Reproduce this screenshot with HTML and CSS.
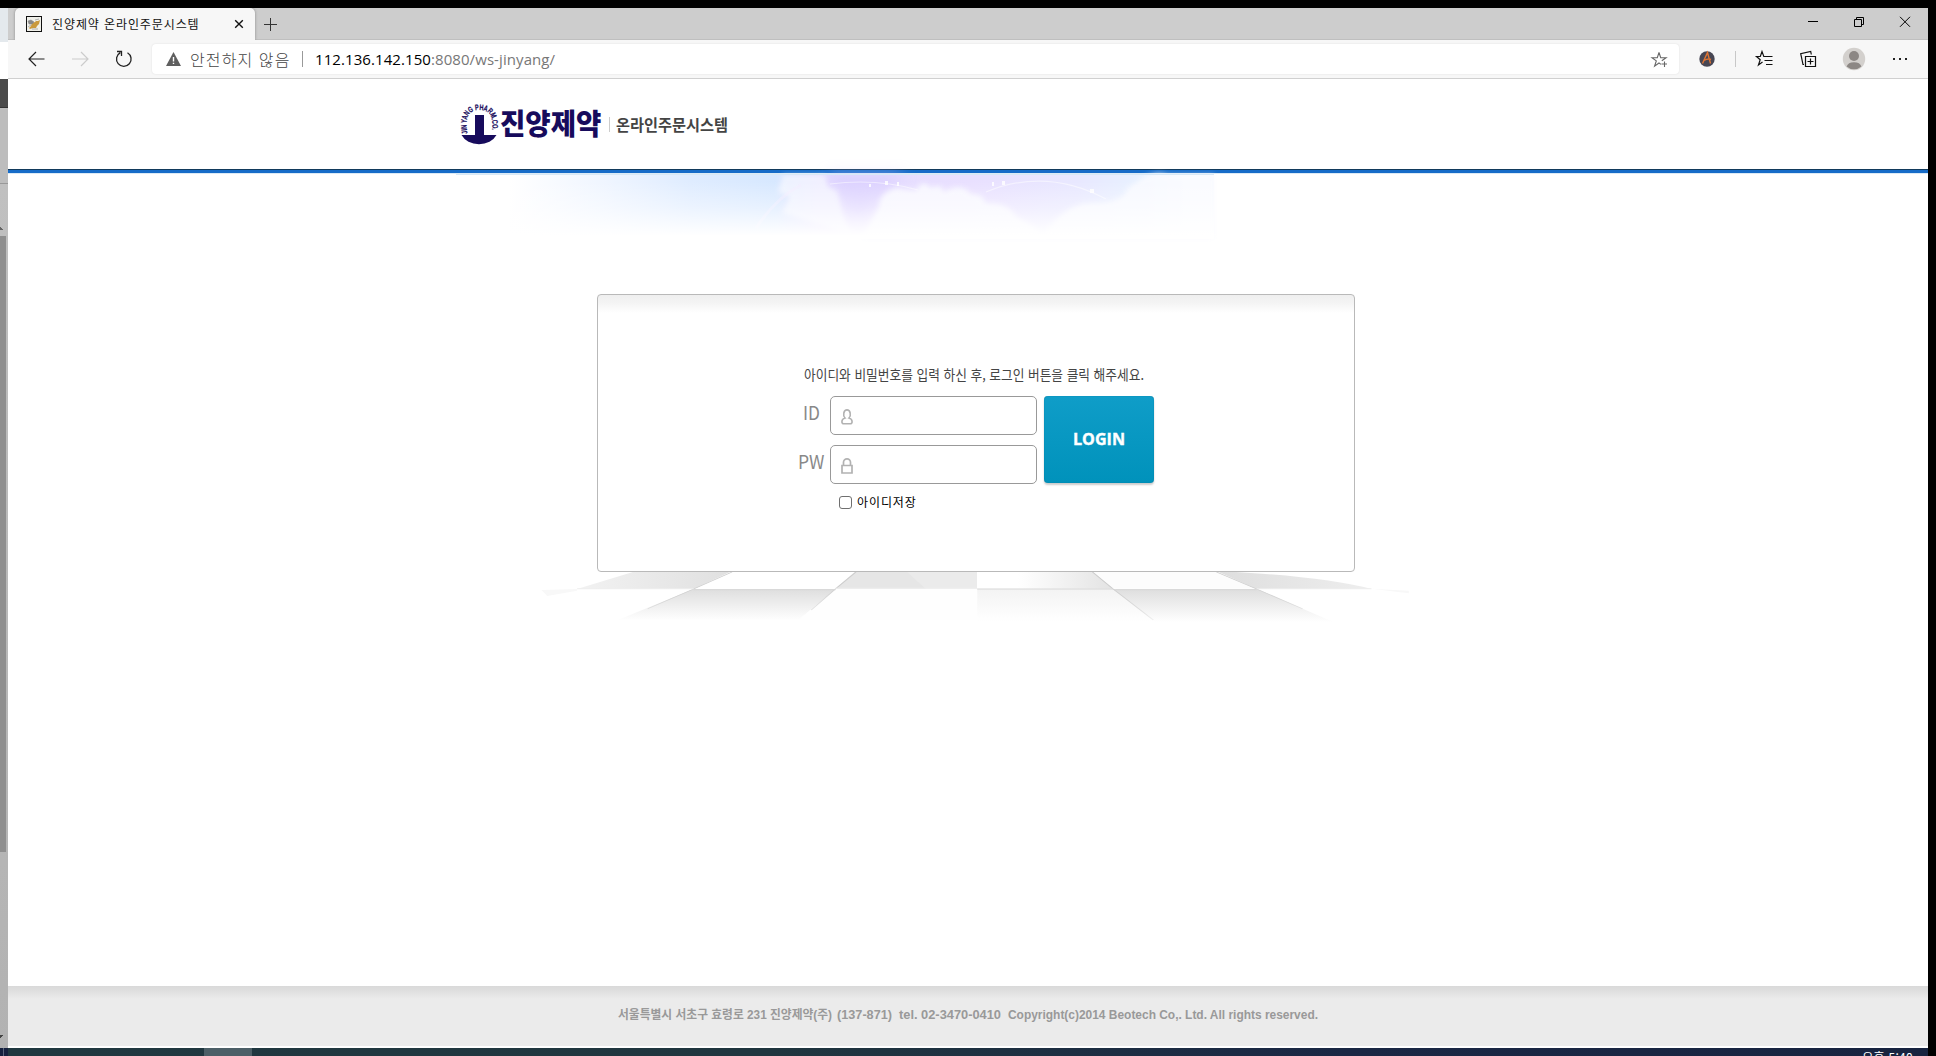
FILE: index.html
```html
<!DOCTYPE html>
<html lang="ko">
<head>
<meta charset="utf-8">
<title>진양제약 온라인주문시스템</title>
<link rel="stylesheet" href="styles.css">
</head>
<body>
<div class="desktop">
  <div class="behind">
    <div class="behind-tabs"></div><div class="behind-bar"></div><div class="behind-head"></div>
    <div class="behind-tools"></div>
    <div class="behind-scroll">
      <svg class="up" width="3" height="3"><path d="M0 0h1v1h1v1h1v1H0z" fill="#666"/></svg>
      <div class="thumb"></div>
      <svg class="down" width="3" height="3"><path d="M0 0h3v1H2v1H1v1H0z" fill="#444"/></svg>
    </div>
  </div>
  <div class="window">
    <div class="tabstrip">
      <div class="tab">
        <svg width="16" height="16" viewBox="0 0 16 16"><rect x=".5" y=".5" width="15" height="15" fill="#f0f0ea" stroke="#111"/><path d="M3 12l2-2 1-3 3-1 1-1 2 0 2-1-1 4-2 2-1 2H9l-2 0-3 1z" fill="#c9993d"/><path d="M2 5l3-1 3 2-2 2-3 0zM9 4l4-1M2 11l3-2M6 13l6 0" fill="#888" stroke="#888" stroke-width=".6"/></svg>
        <span class="tab-title">진양제약 온라인주문시스템</span>
        <svg class="tab-close" width="10" height="10" viewBox="0 0 10 10"><path d="M1.2 1.2l7.600 7.600M8.800 1.200l-7.600 7.600" stroke="#111" stroke-width="1.400"/></svg>
      </div>
      <svg class="newtab" width="13" height="13" viewBox="0 0 13 13"><path d="M6.500 0v13M0 6.500h13" stroke="#333"/></svg>
      <svg class="winctl" width="104" height="12" viewBox="0 0 104 12" fill="none" stroke="#000"><path d="M0 5.500h10M46.500 3.500h7v7h-7zM48.500 3.500v-2h7v7h-2M92 .8l10 10M102 .8l-10 10"/></svg>
    </div>
    <div class="toolbar">
      <svg class="nav" width="104" height="18" viewBox="0 0 104 18" fill="none"><path d="M16.500 9H1.500M8 2L1 9l7 7" stroke="#222" stroke-width="1.200"/><path d="M44 9h15.500M53 2l7 7-7 7" stroke="#ccc" stroke-width="1.200"/><path d="M99.500 2.700A7.300 7.300 0 1 1 92.300 2.600M89 1.500h4.500V6" stroke="#222" stroke-width="1.300"/></svg>
      <div class="address">
        <svg class="warn" width="15" height="14" viewBox="0 0 15 14"><path d="M7.500 0L15 14H0z" fill="#5f5f5f"/><path d="M6.800 5h1.400v4.500H6.800zM6.800 10.700h1.400V12H6.800z" fill="#fff"/></svg>
        <span class="unsafe">안전하지 않음</span><span class="bar"></span>
        <span class="url"><b>112.136.142.150</b>:8080/ws-jinyang/</span>
        <svg class="star" width="17" height="17" viewBox="0 0 17 17" fill="none" stroke="#666"><path d="M8 1.500l1.700 5.200h5.400l-4.300 3.100M8 1.500L6.300 6.700H1l4.300 3.200-1.700 5.200L8 12l2 1.400M10.500 13H16M13.500 10.500V16" stroke-width="1.100"/></svg>
      </div>
      <svg class="tools" width="212" height="24" viewBox="0 0 212 24" fill="none">
        <circle cx="8" cy="12" r="7.700" fill="#474653"/><path d="M3.500 16.500L8.500 5.500l3 11M5 13.500q4-2.500 7-1" stroke="#df7433" stroke-width="1.400"/>
        <path d="M36.500 4v16" stroke="#c8c8c8"/>
        <path d="M67 9.500h-2.200L63 4.500l-1.700 5H57.500l3.700 3.200-1.700 5.200 4-3M67 9.500h6.500M65.500 13.500h8M67 17.500h6.500" stroke="#111" stroke-width="1.200"/>
        <path d="M106.500 9.500h10v10h-10zM111.500 11.500v6M108.500 14.500h6M105 17.500h-1l-2.300-10.800 10-2.200.6 3" stroke="#111" stroke-width="1.200"/>
        <circle cx="155" cy="12" r="11.200" fill="#d3d0cd"/><circle cx="155" cy="9" r="5" fill="#8c8784"/><path d="M147.600 19.500a7.600 5.500 0 0 1 14.800 0 11.200 11.200 0 0 1-14.800 0z" fill="#8c8784"/>
        <path d="M194 11h2v2h-2zM200 11h2v2h-2zM206 11h2v2h-2z" fill="#222"/>
      </svg>
    </div>
    <div class="page">
      <header class="site-header">
        <svg width="36" height="44" viewBox="0 0 36 44"><path d="M14 12h9v20h12.500a19 15 0 0 1-35 0H14z" fill="#170b5c"/><defs><path id="arc" d="M6.500 30.500C3.700 17 6 7 18.400 7S33 17 30.300 31"/></defs><text class="ring"><textPath href="#arc" textLength="59" lengthAdjust="spacingAndGlyphs">JIN YANG PHARM.CO.</textPath></text></svg>
        <svg class="brand" width="102" height="40" viewBox="0 0 102 40"><text x="0" y="28.500" textLength="101.500" lengthAdjust="spacingAndGlyphs">진양제약</text></svg>
        <span class="split"></span>
        <svg class="subtitle" width="116" height="26" viewBox="0 0 116 26"><text x="0" y="18" textLength="112" lengthAdjust="spacingAndGlyphs">온라인주문시스템</text></svg>
      </header>
      <svg class="sky" width="758" height="66" viewBox="0 0 758 66">
        <defs>
          <filter id="soft" x="-20%" y="-50%" width="140%" height="200%"><feGaussianBlur stdDeviation="7"/></filter>
          <filter id="puff" x="-20%" y="-50%" width="140%" height="200%"><feGaussianBlur stdDeviation="2.500"/></filter>
          <linearGradient id="hue"><stop offset=".07" stop-color="#fff"/><stop offset=".2" stop-color="#eff5ff"/><stop offset=".31" stop-color="#dfecff"/><stop offset=".42" stop-color="#d7e8ff"/><stop offset=".48" stop-color="#e4dcff"/><stop offset=".68" stop-color="#e9e0ff"/><stop offset=".82" stop-color="#e8e8ff"/><stop offset=".9" stop-color="#e8f1ff"/><stop offset=".96" stop-color="#fafbff"/></linearGradient>
          <linearGradient id="fade" x2="0" y2="1"><stop offset=".1" stop-color="#fff" stop-opacity="0"/><stop offset=".5" stop-color="#fff" stop-opacity=".4"/><stop offset=".95" stop-color="#fff"/></linearGradient>
        </defs>
        <rect y="1" width="758" height="65" fill="url(#hue)"/>
        <path d="M370 1H450L420 30 400 50z" fill="#d3c6ff" opacity=".5" filter="url(#soft)"/>
        <path d="M327 2h42l3 12 9 4 6 24 9 20-70-22 8-16-12-5z" fill="#f7f9ff" opacity=".7" filter="url(#puff)"/>
        <path d="M405 66l18-32q0-15 18-19 15 3 20 2 5-12 14-2 12-5 12 4 20-10 28 2 13 0 14 9 25 0 30 13 20 10 28 20 22-34 50-33 30 0 35-15 25-20 40-13h46v64z" fill="#fafbff" opacity=".85" filter="url(#puff)"/>
        <path d="M374 11Q420 5 462 17M530 19Q590-6 650 26" fill="none" stroke="#fff" stroke-width="1.200" opacity=".5"/>
        <path d="M300 55Q320 25 345 12" fill="none" stroke="#f6ecff" stroke-width="3" opacity=".4"/>
        <path d="M413 11h2v3h-2zM429 8h3v4h-3zM441 9h2v4h-2zM536 9h2v4h-2zM546 8h3v4h-3zM634 16h4v4h-4z" fill="#fff" opacity=".8"/>
        <rect y="2" width="758" height="64" fill="url(#fade)"/>
        <rect y="1" width="758" height="1" fill="#d8e9f6"/>
      </svg>
      <main class="card">
        <div class="form">
          <svg class="guide" width="344" height="24" viewBox="0 0 344 24"><text x="0" y="15" textLength="340" lengthAdjust="spacingAndGlyphs">아이디와 비밀번호를 입력 하신 후, 로그인 버튼을 클릭 해주세요.</text></svg>
          <div class="fields">
            <svg class="labels" width="31" height="88" viewBox="0 0 31 88"><text x="4" y="24" textLength="17" lengthAdjust="spacingAndGlyphs">ID</text><text x="-1" y="73" textLength="26.500" lengthAdjust="spacingAndGlyphs">PW</text></svg>
            <div class="inputs">
              <div class="input"><svg width="12" height="16" viewBox="0 0 12 16" fill="none" stroke="#b2b2b2" stroke-width="1.600"><path d="M4 9C1.600 6.500 2.600.9 6 .9S10.400 6.500 8 9c2.200.6 3.100 2 3.100 3.800 0 1.300-.7 2-1.900 2H2.800c-1.200 0-1.900-.7-1.900-2C.9 11 1.800 9.600 4 9z"/></svg></div>
              <div class="input"><svg width="12" height="16" viewBox="0 0 12 16" fill="none" stroke="#b2b2b2" stroke-width="1.700"><path d="M1 7.500h10v7.500H1zM2.500 7.500V4.300a3.500 3.500 0 0 1 7 0v3.200"/></svg></div>
            </div>
            <div class="login"><svg width="56" height="20" viewBox="0 0 56 20"><text x="2" y="15" textLength="52" lengthAdjust="spacingAndGlyphs">LOGIN</text></svg></div>
          </div>
          <label class="save"><span class="check"></span><span class="save-text">아이디저장</span></label>
        </div>
      </main>
      <svg class="floor" width="900" height="58" viewBox="0 96 1568 174" preserveAspectRatio="none">
        <defs>
          <linearGradient id="g1"><stop offset="0" stop-color="#f2f2f2"/><stop offset="1" stop-color="#e0e0e0"/></linearGradient>
          <linearGradient id="g2" x2="0" y2="1"><stop offset="0" stop-color="#dedede"/><stop offset="1" stop-color="#fff"/></linearGradient>
          <linearGradient id="g3" x2="0" y2="1"><stop offset="0" stop-color="#f3f3f3"/><stop offset="1" stop-color="#fff"/></linearGradient>
          <linearGradient id="g4"><stop offset=".3" stop-color="#fff"/><stop offset="1" stop-color="#e3e3e3"/></linearGradient>
          <linearGradient id="g5"><stop offset="0" stop-color="#dedede"/><stop offset="1" stop-color="#eee"/></linearGradient>
          <linearGradient id="g6" gradientUnits="userSpaceOnUse" x1="0" y1="96" x2="0" y2="240"><stop offset=".3" stop-color="#ccc"/><stop offset="1" stop-color="#ccc" stop-opacity="0.300"/></linearGradient>
        </defs>
        <path d="M185 93H352L285 147H82z" fill="url(#g1)"/>
        <path d="M568 93H779V146H532z" fill="#ebebeb"/><path d="M568 93h87l34 53H532z" fill="#e6e6e6"/>
        <path d="M779 93H980l36 53H779z" fill="url(#g4)"/>
        <path d="M980 93h216l70 53H1016z" fill="#fcfcfc"/>
        <path d="M1196 93Q1380 108 1466 147H1266z" fill="url(#g5)"/>
        <path d="M285 147H532L467 242H150z" fill="url(#g2)"/>
        <path d="M779 147h237l72 97H779z" fill="url(#g3)"/>
        <path d="M1016 147h250l134 99H1088z" fill="url(#g2)"/>
        <path d="M532 147H779V240H467z" fill="#fefefe"/>
        <path d="M352 96L285 147 205 206M568 96L532 147 490 210M980 96l36 51 70 93M1196 96l70 51 80 59" fill="none" stroke="url(#g6)" stroke-width="2"/>
        <path d="M82 146H285M532 145H779M1266 146h200" fill="none" stroke="#eee" stroke-width="3"/>
        <path d="M20 150L82 147v5L30 168zM1466 146l65 6v8z" fill="#f8f8f8"/>
        <path d="M285 149H532M779 147h237M1020 149h246" stroke="#d8d8d8" stroke-width="3"/>
      </svg>
      <footer class="site-footer">
        <svg width="704" height="20" viewBox="0 0 704 20">
          <text x="0" y="13" textLength="214" lengthAdjust="spacingAndGlyphs">서울특별시 서초구 효령로 231 진양제약(주)</text>
          <text x="219" y="13" textLength="55" lengthAdjust="spacingAndGlyphs">(137-871)</text>
          <text x="281" y="13" textLength="102" lengthAdjust="spacingAndGlyphs">tel. 02-3470-0410</text>
          <text x="390" y="13" textLength="310" lengthAdjust="spacingAndGlyphs">Copyright(c)2014 Beotech Co,. Ltd. All rights reserved.</text>
        </svg>
      </footer>
    </div>
  </div>
  <div class="taskbar"><div class="start"></div><div class="active"></div><span class="clock">오후 5:40</span></div>
</div>
</body>
</html>
```
FILE: styles.css
```css
* { box-sizing: border-box; }
body { margin: 0; background: #000; font-family: "Liberation Sans", "Noto Sans CJK KR", sans-serif; }
svg { display: block; flex: none; overflow: visible; }
.desktop { display: grid; grid-template: 1040px 8px / 8px 1920px; padding-top: 8px; width: 1936px; height: 1056px; overflow: hidden; }
.behind { display: flex; flex-direction: column; background: #bdbdbd; }
.behind-tabs { height: 34px; background: #e4e9ed; }
.behind-bar { height: 37px; background: #fff; }
.behind-head { height: 29px; background: #4a4a4a; border-bottom: 1px solid #333; }
.behind-tools { height: 76px; border-bottom: 1px solid #999; }
.behind-scroll { flex: 1; background: linear-gradient(#c0c0c0, #b2b2b2); }
.up { margin-top: 43px; }
.thumb { width: 6px; height: 616px; margin-top: 6px; background: #8f8f8f; }
.down { margin-top: 183px; }

.window { display: flex; flex-direction: column; background: #fff; overflow: hidden; }
.tabstrip { display: flex; align-items: center; height: 32px; background: #cdcdcd; box-shadow: inset 0 -1px #bfbfbf; flex: none; }
.tab { display: flex; align-items: center; width: 240px; height: 32px; margin-left: 7px; padding-left: 11px; background: #f7f7f7; border-radius: 5px 5px 0 0; box-shadow: 0 0 3px #888; clip-path: inset(0 -4px 0 -4px); }
.tab-title { margin-left: 10px; width: 176px; font: 12px/16px "Noto Sans CJK KR", sans-serif; letter-spacing: .9px; color: #111; white-space: nowrap; }
.tab-close { margin-left: 6px; }
.newtab { margin-left: 9px; }
.winctl { margin-left: auto; margin-right: 16px; margin-top: -4px; }
.toolbar { display: flex; align-items: center; height: 39px; background: #f7f7f7; border-bottom: 1px solid #d0d0d0; flex: none; }
.nav { margin-left: 20px; }
.address { display: flex; align-items: center; width: 1527px; height: 30px; margin-left: 20px; background: #fff; border-radius: 4px; box-shadow: 0 0 2px #ddd; }
.warn { margin-left: 14px; }
.unsafe { width: 102px; margin-left: 9px; font: 300 16px/20px "Noto Sans CJK KR", sans-serif; letter-spacing: 1.100px; color: #444; white-space: nowrap; }
.bar { width: 1px; height: 16px; margin-left: 10px; background: #999; }
.url { margin-left: 12px; font: 15px/20px "Open Sans", sans-serif; letter-spacing: .08px; color: #777; white-space: nowrap; }
.url b { font-weight: 400; color: #000; }
.star { margin-left: auto; margin-right: 11px; }
.tools { margin-left: 20px; }

.page { display: flex; flex-direction: column; flex: 1; background: #fff; }
.site-header { display: flex; align-items: flex-start; height: 94px; padding: 24px 0 0 453px; border-bottom: 3px solid #176cc8; box-shadow: inset 0 -1px #123a5c, 0 1px #dceaf5; flex: none; }
.ring { font: bold 8px "Liberation Sans", sans-serif; fill: #170b5c; stroke: #170b5c; stroke-width: .2px; }
.brand { margin: 3px 0 0 3px; }
.brand text { font: 900 29px "Noto Sans CJK KR", sans-serif; fill: #170b5c; }
.split { width: 1px; height: 15px; margin: 14px 0 0 7px; background: #ccc; }
.subtitle { margin: 10px 0 0 6px; }
.subtitle text { font: bold 15.500px "Noto Sans CJK KR", sans-serif; fill: #444; }
.sky { margin-left: 448px; }
.card { width: 758px; height: 278px; margin: 55px 0 0 589px; padding: 68px 0 0 202px; border: 1px solid #b9b9b9; border-radius: 4px; background: linear-gradient(#efefef, #f4f4f4 8px, #fff 18px); flex: none; }
.guide { margin: 2px 0 0 5px; }
.guide text { font: 13.800px "Noto Sans CJK KR", sans-serif; fill: #444; }
.form { margin-left: -1px; }
.fields { display: flex; margin-top: 7px; }
.labels text { font: 19px "Noto Sans CJK KR", sans-serif; fill: #888; }
.inputs { display: flex; flex-direction: column; gap: 10px; }
.input { display: flex; align-items: center; width: 207px; height: 39px; padding-left: 10px; border: 1px solid #999; border-radius: 5px; background: #fff; }
.input svg { margin-top: 2px; }
.login { display: flex; align-items: center; justify-content: center; width: 110px; height: 87px; margin-left: 7px; border-radius: 4px; background: linear-gradient(#0f9dc8, #0092bb); box-shadow: inset 0 0 1px #00698a, 0 2px 2px #ccc; }
.login text { font: bold 16px "Open Sans", sans-serif; fill: #fff; stroke: #fff; stroke-width: .4px; }
.save { display: flex; align-items: center; margin: 8px 0 0 40px; height: 20px; }
.check { width: 13px; height: 13px; border: 1px solid #6f6f6f; border-radius: 3px; }
.save-text { margin-left: 5px; font: 12px/18px "Noto Sans CJK KR", sans-serif; letter-spacing: .9px; color: #000; white-space: nowrap; }
.floor { margin-left: 522px; overflow: hidden; }
.site-footer { height: 60px; margin-top: auto; margin-bottom: 2px; padding: 20px 0 0 610px; background: linear-gradient(#d9d9d9, #dfdfdf 5px, #ebebeb 13px); }
.site-footer text { font: bold 12px "Liberation Sans", "Noto Sans CJK KR", sans-serif; fill: #999; }

.taskbar { grid-column: 1 / 3; display: flex; height: 8px; overflow: hidden; background: linear-gradient(90deg, #203840, #20363f 40%, #1a2744 70%, #182440); }
.start { width: 8px; background: linear-gradient(90deg, #16213f 3px, #59647c 3px, #59647c 4px, #16213f 4px); }
.active { width: 48px; margin-left: 196px; background: #4c5f67; }
.clock { margin-left: auto; margin-right: 15px; padding-top: 1px; font: 12px/16px "Noto Sans CJK KR", sans-serif; letter-spacing: .3px; color: #fff; }
```
